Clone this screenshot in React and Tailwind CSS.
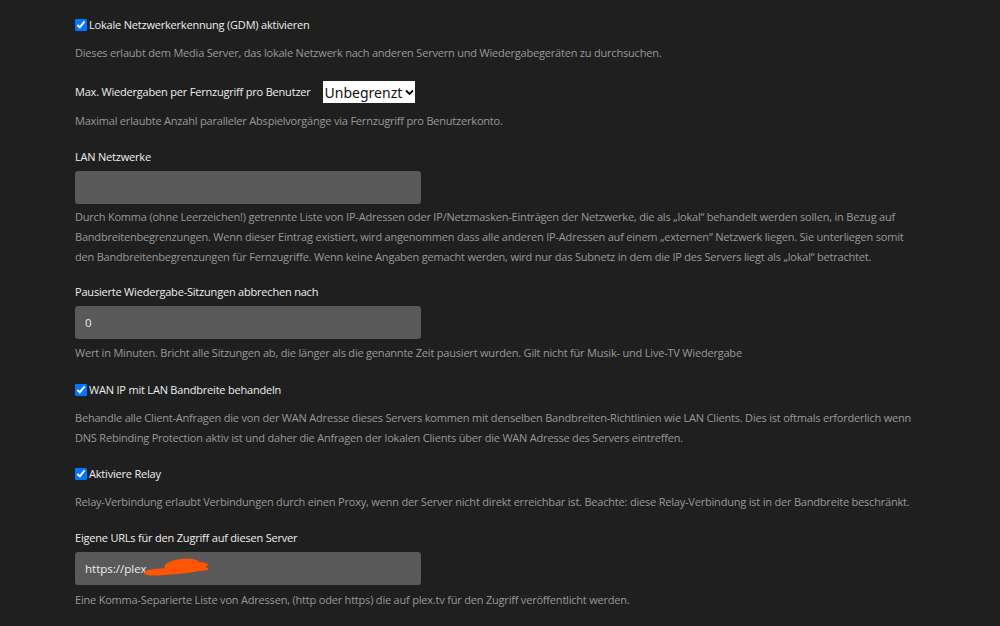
import React from "react";

const font = { fontFamily: '"Open Sans", "Noto Sans", sans-serif' };

function Check({ label }) {
  return (
    <label className="flex items-center h-[20px] text-[11px] tracking-[-0.2px] text-[#eeeeee]">
      <input type="checkbox" defaultChecked className="w-[12px] h-[12px] m-0 mr-[2px] accent-[#0075ff]" />
      <span>{label}</span>
    </label>
  );
}

function Desc({ children, className = "" }) {
  return <div className={"text-[11px] tracking-[-0.2px] leading-[20px] text-[#999999] " + className}>{children}</div>;
}

function Label({ children, className = "" }) {
  return <div className={"text-[11px] tracking-[-0.2px] leading-[20px] text-[#eeeeee] " + className}>{children}</div>;
}

function Input({ value, children, className = "" }) {
  return (
    <div className={"relative w-[346px] h-[33px] rounded-[3px] bg-[#595959] flex items-center px-[10px] text-[11.5px] text-[#eeeeee] " + className}>
      {value}
      {children}
    </div>
  );
}

export default function App() {
  return (
    <div className="w-[1000px] h-[626px] bg-[#1f1f1f] overflow-hidden" style={font}>
      <div className="pl-[75px] pt-[15px] flex flex-col">
        <Check label="Lokale Netzwerkerkennung (GDM) aktivieren" />
        <Desc className="mt-[8px]">
          Dieses erlaubt dem Media Server, das lokale Netzwerk nach anderen Servern und Wiedergabegeräten zu durchsuchen.
        </Desc>

        <div className="mt-[18px] flex items-center h-[22px]">
          <Label>Max. Wiedergaben per Fernzugriff pro Benutzer</Label>
          <div className="ml-[12px] h-[22px] w-[92px] bg-white flex items-center pl-[2px] text-[14px] text-[#111111]" style={{ fontFamily: '"Noto Sans", "Open Sans", sans-serif' }}>
            <span>Unbegrenzt</span>
            <svg width="9" height="7" viewBox="0 0 9 7" className="ml-[3px] shrink-0 block">
              <path d="M1 1.5 L4.5 5 L8 1.5" stroke="black" strokeWidth="1.8" fill="none" />
            </svg>
          </div>
        </div>
        <Desc className="mt-[8px]">
          Maximal erlaubte Anzahl paralleler Abspielvorgänge via Fernzugriff pro Benutzerkonto.
        </Desc>

        <Label className="mt-[16px]">LAN Netzwerke</Label>
        <Input className="mt-[4px]" />
        <Desc className="mt-[3px]">
          <div className="whitespace-nowrap">Durch Komma (ohne Leerzeichen!) getrennte Liste von IP-Adressen oder IP/Netzmasken-Einträgen der Netzwerke, die als „lokal“ behandelt werden sollen, in Bezug auf</div>
          <div className="whitespace-nowrap">Bandbreitenbegrenzungen. Wenn dieser Eintrag existiert, wird angenommen dass alle anderen IP-Adressen auf einem „externen“ Netzwerk liegen. Sie unterliegen somit</div>
          <div className="whitespace-nowrap">den Bandbreitenbegrenzungen für Fernzugriffe. Wenn keine Angaben gemacht werden, wird nur das Subnetz in dem die IP des Servers liegt als „lokal“ betrachtet.</div>
        </Desc>

        <Label className="mt-[15px]">Pausierte Wiedergabe-Sitzungen abbrechen nach</Label>
        <Input className="mt-[4px]" value="0" />
        <Desc className="mt-[4px]">
          Wert in Minuten. Bricht alle Sitzungen ab, die länger als die genannte Zeit pausiert wurden. Gilt nicht für Musik- und Live-TV Wiedergabe
        </Desc>

        <div className="mt-[17px]">
          <Check label="WAN IP mit LAN Bandbreite behandeln" />
        </div>
        <Desc className="mt-[8px]">
          <div className="whitespace-nowrap">Behandle alle Client-Anfragen die von der WAN Adresse dieses Servers kommen mit denselben Bandbreiten-Richtlinien wie LAN Clients. Dies ist oftmals erforderlich wenn</div>
          <div className="whitespace-nowrap">DNS Rebinding Protection aktiv ist und daher die Anfragen der lokalen Clients über die WAN Adresse des Servers eintreffen.</div>
        </Desc>

        <div className="mt-[16px]">
          <Check label="Aktiviere Relay" />
        </div>
        <Desc className="mt-[8px] whitespace-nowrap">
          Relay-Verbindung erlaubt Verbindungen durch einen Proxy, wenn der Server nicht direkt erreichbar ist. Beachte: diese Relay-Verbindung ist in der Bandbreite beschränkt.
        </Desc>

        <Label className="mt-[16px]">Eigene URLs für den Zugriff auf diesen Server</Label>
        <Input className="mt-[4px]" value="https://plex.">
          <svg className="absolute left-[66px] top-[5px]" width="72" height="20" viewBox="0 0 72 20">
            <path
              d="M3 16 C 3 13, 12 12, 24 11 C 22 8, 26 4, 40 2 C 50 1, 58 3, 58 5 C 66 5, 70 8, 64 10 C 70 11, 68 14, 58 14 C 50 16, 36 17, 24 18 C 14 19, 4 19, 3 16 Z"
              fill="#ff5500"
            />
          </svg>
        </Input>
        <Desc className="mt-[5px]">
          Eine Komma-Separierte Liste von Adressen, (http oder https) die auf plex.tv für den Zugriff veröffentlicht werden.
        </Desc>
      </div>
    </div>
  );
}
